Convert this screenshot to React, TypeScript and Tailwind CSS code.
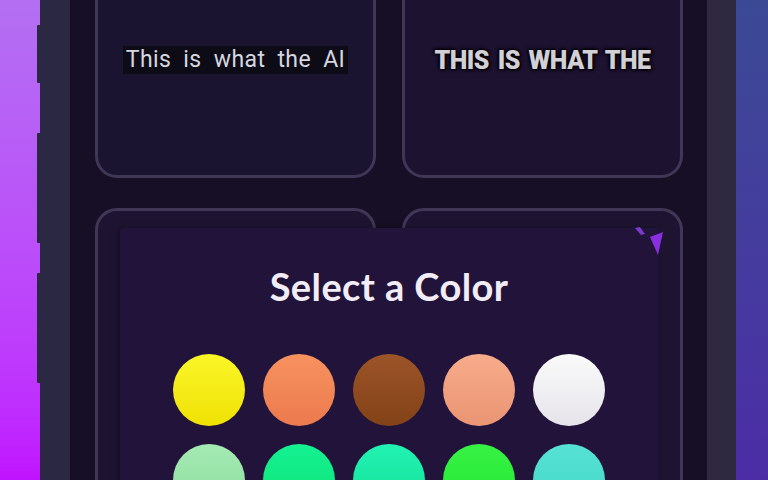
const row1 = [
  'from-[#fbf626] to-[#efe200]',
  'from-[#f7925f] to-[#ec7a4e]',
  'from-[#9c5428] to-[#834217]',
  'from-[#f7ab8a] to-[#ea9574]',
  'from-[#fafafa] to-[#e6e4ea]',
];

const row2 = [
  'from-[#a4eab4] to-[#8adc9a]',
  'from-[#14f292] to-[#0fe074]',
  'from-[#22f2b2] to-[#10e096]',
  'from-[#36f244] to-[#22e632]',
  'from-[#56e2d4] to-[#40d6c6]',
];

function Swatch({ cls }: { cls: string }) {
  return <div className={`h-[72px] w-[72px] rounded-full bg-linear-to-b ${cls}`} />;
}

export default function App() {
  return (
    <div className="relative flex h-[480px] w-[768px] overflow-hidden">
      {/* left backdrop + side buttons */}
      <div className="flex w-[40px] flex-col items-end bg-linear-to-b from-[#b36ff2] to-[#c012ff]">
        <div className="h-[25px]" />
        <div className="h-[58px] w-[3px] rounded-l-[1px] bg-[#2a2843]" />
        <div className="h-[50px]" />
        <div className="h-[110px] w-[3px] rounded-l-[1px] bg-[#2a2843]" />
        <div className="h-[30px]" />
        <div className="h-[110px] w-[3px] rounded-l-[1px] bg-[#2a2843]" />
      </div>

      {/* phone frame */}
      <div className="w-[30px] bg-[#2a2843]" />

      {/* screen */}
      <div className="flex w-[637px] flex-col gap-[30px] bg-[#170f25] pl-[25px] pr-[24px]">
        <div className="-mt-[62px] grid grid-cols-2 gap-[26px]">
          <div className="flex h-[240px] justify-center rounded-[22px] border-[3px] border-[#403756] bg-[#1b1430] pt-[105px]">
            <div className="h-[28px] bg-[#0d0b16] px-[3px] text-[23px] leading-[28px] tracking-[0.4px] text-[#d6d6e0] [font-family:Roboto,'Liberation_Sans',sans-serif] [word-spacing:6px]">
              This is what the AI
            </div>
          </div>
          <div className="flex h-[240px] justify-center rounded-[22px] border-[3px] border-[#403756] bg-[#1d1230] pt-[104px]">
            <div className="text-[25px] leading-[32px] font-black tracking-[-0.5px] text-[#d2d0d6] [font-family:Roboto,'Liberation_Sans',sans-serif] [text-shadow:1px_1px_3px_#000,-1px_-1px_3px_#000,0_0_4px_#000] [word-spacing:3px]">
              THIS IS WHAT THE
            </div>
          </div>
        </div>
        <div className="grid grid-cols-2 gap-[26px]">
          <div className="h-[300px] rounded-[22px] border-[3px] border-[#403756] bg-[#1e1432]" />
          <div className="h-[300px] rounded-[22px] border-[3px] border-[#403756] bg-[#1e1432]" />
        </div>
      </div>

      {/* phone frame */}
      <div className="w-[29px] bg-[#2e2840]" />

      {/* right backdrop */}
      <div className="w-[32px] bg-linear-to-b from-[#3b4995] to-[#4b2ca5]" />

      {/* color picker sheet */}
      <div className="absolute left-[120px] top-[228px] flex h-[270px] w-[538px] flex-col items-center rounded-tl-[4px] bg-[#21133a] pt-[31px] shadow-[-2px_0_6px_rgba(0,0,0,0.35)]">
        <h2 className="text-[38px] leading-[54px] font-bold tracking-[0.4px] text-[#f2ecf6] [font-family:Lato,'Liberation_Sans',sans-serif]">
          Select a Color
        </h2>
        <div className="mt-[41px] grid grid-cols-5 gap-[18px]">
          {row1.map((c) => (
            <Swatch key={c} cls={c} />
          ))}
          {row2.map((c) => (
            <Swatch key={c} cls={c} />
          ))}
        </div>
      </div>

      {/* purple marker peeking from behind */}
      <svg className="absolute left-[632px] top-[225px]" width="34" height="32" viewBox="0 0 34 32">
        <polygon points="3,3 8,2 13,9 9,10" fill="#7a3acb" />
        <polygon points="18,12 31,7 26,30" fill="#8a2fe0" />
      </svg>
    </div>
  );
}
